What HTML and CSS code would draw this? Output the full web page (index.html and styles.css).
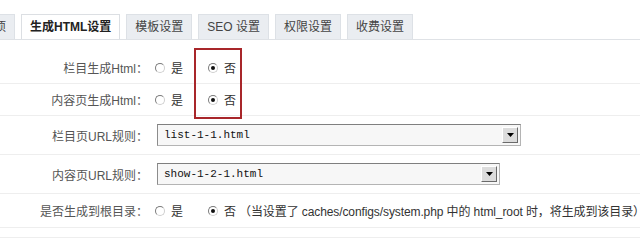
FILE: index.html
```html
<!DOCTYPE html>
<html lang="zh-CN">
<head>
<meta charset="utf-8">
<title>生成HTML设置</title>
<link rel="stylesheet" href="styles.css">
</head>
<body>
<div class="page">
  <div class="tabbar">
    <ul class="tabs">
      <li class="tab">基本选项</li>
      <li class="tab active">生成HTML设置</li>
      <li class="tab">模板设置</li>
      <li class="tab">SEO 设置</li>
      <li class="tab">权限设置</li>
      <li class="tab">收费设置</li>
    </ul>
  </div>
  <div class="form">
    <div class="row r1">
      <div class="label">栏目生成Html：</div>
      <div class="field">
        <span class="opt"><span class="radio"></span>是</span>
        <span class="opt"><span class="radio checked"></span>否</span>
      </div>
    </div>
    <div class="row r2">
      <div class="label">内容页生成Html：</div>
      <div class="field">
        <span class="opt"><span class="radio"></span>是</span>
        <span class="opt"><span class="radio checked"></span>否</span>
      </div>
    </div>
    <div class="row r3">
      <div class="label">栏目页URL规则：</div>
      <div class="field">
        <div class="select wide"><span class="val">list-1-1.html</span><span class="arrow"><svg width="7" height="4" viewBox="0 0 7 4"><path d="M0 0H7L3.5 4Z" fill="#000"/></svg></span></div>
      </div>
    </div>
    <div class="row r4">
      <div class="label">内容页URL规则：</div>
      <div class="field">
        <div class="select narrow"><span class="val">show-1-2-1.html</span><span class="arrow"><svg width="7" height="4" viewBox="0 0 7 4"><path d="M0 0H7L3.5 4Z" fill="#000"/></svg></span></div>
      </div>
    </div>
    <div class="row r5">
      <div class="label">是否生成到根目录：</div>
      <div class="field">
        <span class="opt"><span class="radio"></span>是</span>
        <span class="opt"><span class="radio checked"></span>否<span class="note">（当设置了 caches/configs/system.php 中的 html_root 时，将生成到该目录）</span></span>
      </div>
    </div>
    <div class="row r6"></div>
    <div class="highlight"></div>
  </div>
</div>
</body>
</html>
```
FILE: styles.css
```css
* { box-sizing: border-box; }
html, body { margin: 0; padding: 0; background: #fff; }
body {
  font-family: "Liberation Sans", "Noto Sans CJK SC", sans-serif;
  font-size: 12px;
  color: #333;
  overflow: hidden;
}
.page { width: 640px; position: relative; }
.tabbar {
  height: 40px;
  border-bottom: 1px solid #dfe2e6;
  padding-top: 14px;
  overflow: hidden;
}
.tabs {
  list-style: none;
  margin: 0 0 0 -51px;
  padding: 0;
  display: flex;
  gap: 6px;
  height: 26px;
}
.tab {
  height: 26px;
  line-height: 24px;
  padding: 0 8px;
  background: #eaedf1;
  border: 1px solid #dde1e6;
  border-bottom: none;
  color: #444;
  white-space: nowrap;
}
.tab.active {
  background: #fff;
  font-weight: bold;
  color: #222;
  padding: 0 8px;
  border-color: #dcdfe3;
}
.form { position: relative; padding-top: 12px; }
.row {
  display: flex;
  align-items: center;
  border-bottom: 1px solid #eeeeee;
}
.r1, .r2 { height: 32px; }
.r3, .r4 { height: 39px; }
.r5 { height: 34px; }
.r6 { height: 10px; }
.label {
  width: 150px;
  padding-right: 2px;
  text-align: right;
  color: #555;
  white-space: nowrap;
  flex-shrink: 0;
}
.field {
  display: flex;
  align-items: center;
  white-space: nowrap;
}
.opt {
  display: inline-flex;
  align-items: center;
  color: #333;
}
.opt + .opt { margin-left: 20px; }
.note {
  margin-left: 3px;
  letter-spacing: -0.1px;
}
.radio {
  width: 10px;
  height: 10px;
  border-radius: 50%;
  border: 1px solid #7a7a7a;
  border-right-color: #cfcfcf;
  border-bottom-color: #cfcfcf;
  margin: 0 6px 0 5px;
  position: relative;
  background: #fff;
}
.radio.checked::after {
  content: "";
  position: absolute;
  left: 2px;
  top: 2px;
  width: 4px;
  height: 4px;
  border-radius: 50%;
  background: #111;
}
.select {
  margin-left: 7px;
  height: 22px;
  border: 1px solid #b4b4b4;
  border-top-color: #7f7f7f;
  border-left-color: #8c8c8c;
  background: #f7f7f7;
  display: flex;
  align-items: center;
  justify-content: space-between;
  padding: 0 2px 0 6px;
  font-family: "Liberation Mono", monospace;
  font-size: 11px;
  color: #111;
}
.select.wide { width: 364px; }
.select.narrow { width: 343px; }
.arrow {
  width: 16px;
  height: 16px;
  background: #dcdcdc;
  border: 1px solid #fff;
  border-right-color: #6a6a6a;
  border-bottom-color: #6a6a6a;
  display: flex;
  align-items: center;
  justify-content: center;
}
.highlight {
  position: absolute;
  left: 194px;
  top: 8px;
  width: 48px;
  height: 71px;
  border: 2px solid #a8262a;
}
```
